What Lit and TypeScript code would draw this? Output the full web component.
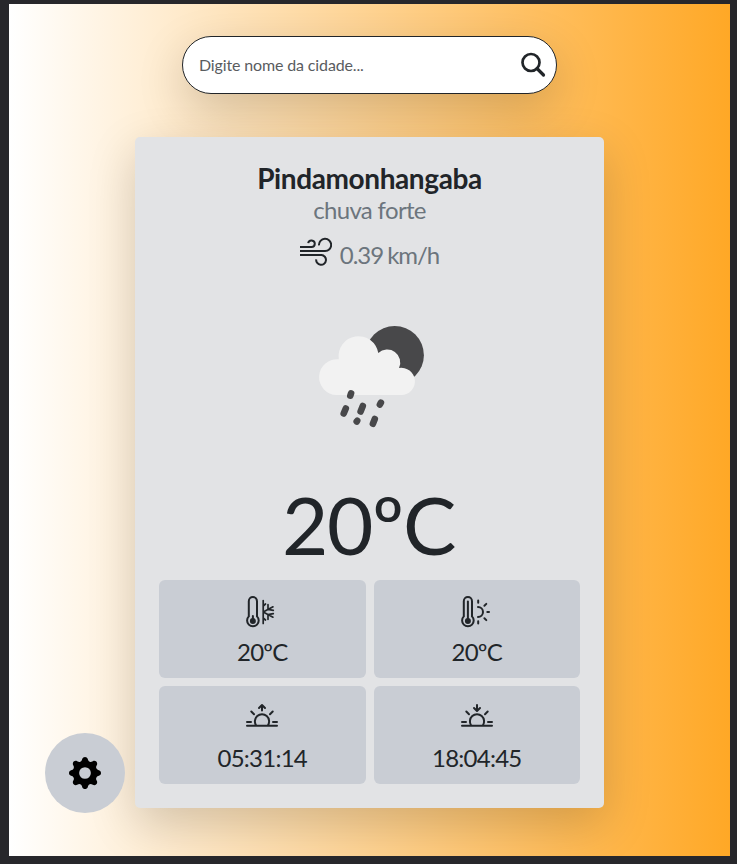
import { LitElement, html, css, svg } from "lit";
import { customElement } from "lit/decorators.js";

const thermometer = svg`
  <path d="M2.800 20.400V5.200A4.100 4.100 0 0 1 11 5.200V20.400A5.800 5.800 0 1 1 2.800 20.400Z"/>
  <circle cx="6.900" cy="25" r="3" class="solid"/>`;

const cold = html`<svg class="icon" viewBox="0 0 32 32">
  ${thermometer}
  <path d="M6.900 25V20"/>
  <path d="M17.200 4.500V27.500M17.200 16L27 10.800M17.200 16L27 21.200M22 13.400V8.700M22 13.400L27.300 14.300M22 18.600V23.300M22 18.600L27.300 17.700M17.200 10L19.500 8M17.200 22L19.500 24" stroke-width="1.700"/>
</svg>`;

const hot = html`<svg class="icon" viewBox="0 0 32 32">
  ${thermometer}
  <path d="M6.900 25V5.500"/>
  <path d="M17 11A5 5 0 0 1 17 21M17.200 4.500V6.800M17.200 25.200V27.500M26.300 16H28M23.400 9.800L25.300 7.900M23.400 22.200L25.300 24.100"/>
</svg>`;

const horizon = (arrow: string) => html`<svg class="icon" viewBox="0 0 32 32">
  <path d="M1 23.700H31M1 20H5M27 20H31M10.200 23.500A7.100 7.100 0 1 1 21.800 23.500M5.300 9.500L8 12.200M26.700 9.500L24 12.200"/>
  <path d=${arrow}/>
</svg>`;

const sunrise = horizon("M16 8.500V3M13 6L16 3L19 6");
const sunset = horizon("M16 3V8.500M13 6L16 9L19 6");

@customElement("app-root")
export class AppRoot extends LitElement {
  static styles = css`
    :host {
      display: block;
      box-sizing: border-box;
      height: 864px;
      padding: 4px 7px 8px 9px;
      background: #27272b;
      font: 400 24px/1.2 Lato, sans-serif;
      color: #212529;
    }
    * { box-sizing: border-box; }
    svg { display: block; fill: none; stroke: currentColor; }
    .page {
      position: relative;
      display: flex;
      flex-direction: column;
      align-items: center;
      height: 852px;
      padding-top: 32px;
      overflow: hidden;
      background: linear-gradient(to right, #fff, #ffa826);
    }
    .search {
      display: flex;
      align-items: center;
      justify-content: space-between;
      width: 375px;
      height: 58px;
      padding: 0 10px 0 16px;
      border: 1px solid #212529;
      border-radius: 29px;
      background: #fff;
      box-shadow: 0 16px 48px rgba(0, 0, 0, 0.175);
    }
    input {
      flex: 1;
      min-width: 0;
      padding: 0;
      border: 0;
      outline: 0;
      background: none;
      font: 16px/24px Lato, sans-serif;
      letter-spacing: -0.14px;
      color: #212529;
    }
    input::placeholder { color: #595c5f; opacity: 1; }
    .lens { width: 26px; height: 26px; }
    .card {
      display: flex;
      flex-direction: column;
      align-items: center;
      width: 469px;
      height: 671px;
      margin-top: 43px;
      padding: 24px;
      border-radius: 5px;
      background: #e2e3e5;
      box-shadow: 0 16px 48px rgba(0, 0, 0, 0.175);
    }
    h1 { margin: 0; font-size: 28px; line-height: 34px; font-weight: 700; letter-spacing: -0.4px; }
    .muted { color: #6c757d; }
    .desc { line-height: 30px; letter-spacing: -0.66px; }
    .wind { display: flex; gap: 8px; height: 60px; line-height: 60px; letter-spacing: -1.05px; word-spacing: -1px; }
    .wind svg { width: 32px; height: 32px; margin-top: 9px; }
    .weather { width: 150px; height: 150px; margin-top: 16px; }
    .temp { margin: 25px 2px 0 0; font-size: 80px; line-height: 96px; letter-spacing: -1.3px; }
    .grid {
      display: grid;
      grid-template-columns: 1fr 1fr;
      grid-auto-rows: 98px;
      gap: 8px;
      width: 100%;
      margin-top: auto;
    }
    .tile {
      display: flex;
      flex-direction: column;
      align-items: center;
      padding-top: 16px;
      border-radius: 6px;
      background: #c9cdd4;
      line-height: 36px;
      letter-spacing: -0.75px;
    }
    .icon { width: 32px; height: 32px; margin-bottom: 6px; stroke-width: 2; stroke-linecap: round; stroke-linejoin: round; }
    .weather, .settings svg, .icon .solid { stroke: none; }
    .solid { fill: currentColor; }
    .settings {
      position: absolute;
      left: 36px;
      bottom: 43px;
      display: grid;
      place-items: center;
      width: 80px;
      height: 80px;
      padding: 0;
      border: 0;
      border-radius: 50%;
      background: #c9cdd4;
      color: #000;
    }
    .settings svg { width: 32px; height: 32px; }
  `;

  private tile(icon: unknown, label: string) {
    return html`<div class="tile">${icon}<span>${label}</span></div>`;
  }

  render() {
    return html`<main class="page">
      <div class="search">
        <input placeholder="Digite nome da cidade..." />
        <svg class="lens" viewBox="0 0 26 26">
          <circle cx="11" cy="10.500" r="8.500" stroke-width="2.700"/>
          <path d="M17 16.500L23.500 23" stroke-width="3.200" stroke-linecap="round"/>
        </svg>
      </div>
      <section class="card">
        <h1>Pindamonhangaba</h1>
        <div class="muted desc">chuva forte</div>
        <div class="wind">
          <svg viewBox="0 0 32 32" stroke-width="2">
            <path d="M0 13H11.500A3.300 3.300 0 1 0 8.200 9.200M0 17H25A6.100 6.100 0 1 0 19 11.400M0 21H21.500A4.900 4.900 0 1 1 16.200 25.300"/>
          </svg>
          <span class="muted">0.39 km/h</span>
        </div>
        <svg class="weather" viewBox="295 301 150 150">
          <circle cx="394.700" cy="355.200" r="29.200" fill="#48484a"/>
          <path fill="#f2f2f2" d="M336.500 395A17.900 17.900 0 1 1 338.800 359.300A19.900 19.900 0 1 1 378.300 353A13 13 0 0 1 399 368A13.600 13.600 0 1 1 401.500 395Z"/>
          <g stroke="#48484a" stroke-width="6.600" stroke-linecap="round">
            <path d="M351.100 393.300L350.300 395.700M345.800 408.500L343.700 413.500M362.800 406L360.600 411.500M380.900 402.700L379.900 404.500M357.200 420.800L356.700 421.500M374.800 419L372.900 423.800"/>
          </g>
        </svg>
        <div class="temp">20ºC</div>
        <div class="grid">
          ${this.tile(cold, "20ºC")} ${this.tile(hot, "20ºC")}
          ${this.tile(sunrise, "05:31:14")} ${this.tile(sunset, "18:04:45")}
        </div>
      </section>
      <button class="settings" aria-label="Configurações">
        <svg viewBox="0 0 16 16">
          <path class="solid" d="M9.405 1.050c-.413-1.400-2.397-1.400-2.810 0l-.1.340a1.464 1.464 0 0 1-2.105.872l-.310-.170c-1.283-.698-2.686.705-1.987 1.987l.169.311c.446.820.023 1.841-.872 2.105l-.340.100c-1.400.413-1.400 2.397 0 2.810l.340.100a1.464 1.464 0 0 1 .872 2.105l-.170.310c-.698 1.283.705 2.686 1.987 1.987l.311-.169a1.464 1.464 0 0 1 2.105.872l.100.340c.413 1.400 2.397 1.400 2.810 0l.100-.340a1.464 1.464 0 0 1 2.105-.872l.310.170c1.283.698 2.686-.705 1.987-1.987l-.169-.311a1.464 1.464 0 0 1 .872-2.105l.340-.100c1.400-.413 1.400-2.397 0-2.810l-.340-.100a1.464 1.464 0 0 1-.872-2.105l.170-.310c.698-1.283-.705-2.686-1.987-1.987l-.311.169a1.464 1.464 0 0 1-2.105-.872l-.100-.340zM8 10.930a2.929 2.929 0 1 1 0-5.860 2.929 2.929 0 0 1 0 5.858z"/>
        </svg>
      </button>
    </main>`;
  }
}
